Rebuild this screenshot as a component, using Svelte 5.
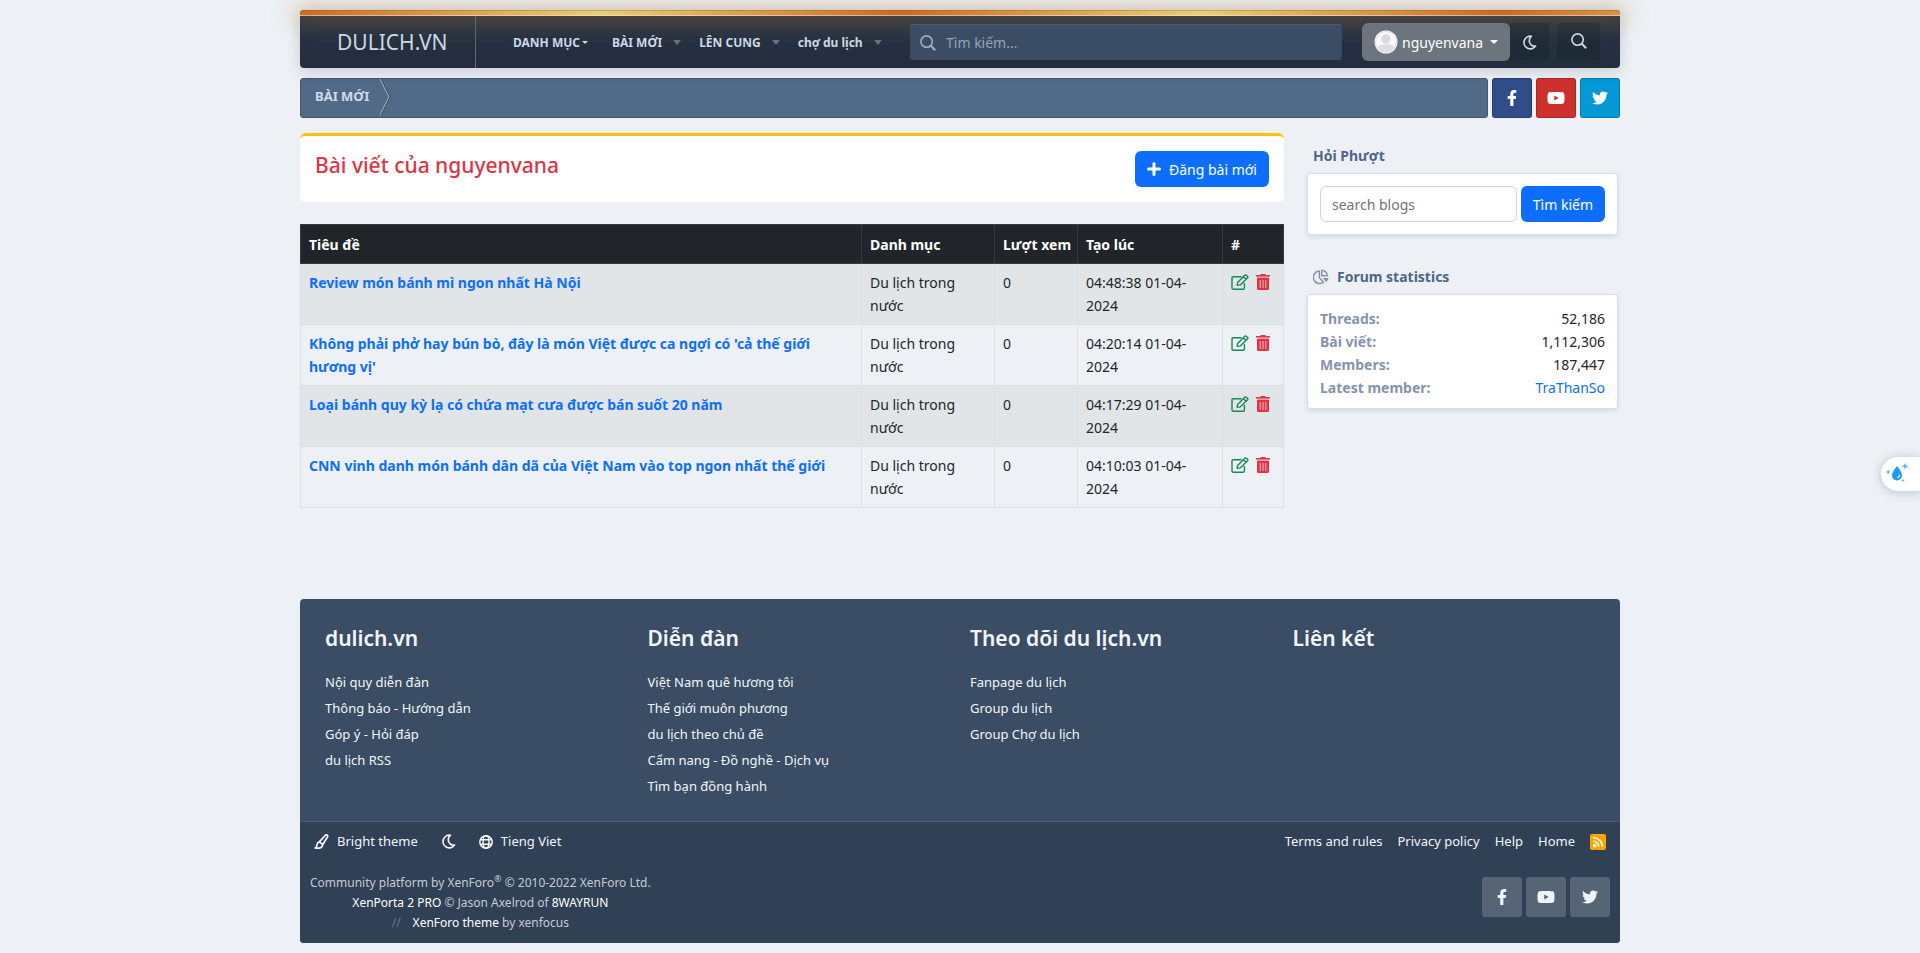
<script>
  const nav = ['BÀI MỚI', 'LÊN CUNG', 'chợ du lịch'];

  const posts = [
    { title: 'Review món bánh mì ngon nhất Hà Nội', views: 0, time: '04:48:38 01-04-2024' },
    { title: "Không phải phở hay bún bò, đây là món Việt được ca ngợi có 'cả thế giới hương vị'", views: 0, time: '04:20:14 01-04-2024' },
    { title: 'Loại bánh quy kỳ lạ có chứa mạt cưa được bán suốt 20 năm', views: 0, time: '04:17:29 01-04-2024' },
    { title: 'CNN vinh danh món bánh dân dã của Việt Nam vào top ngon nhất thế giới', views: 0, time: '04:10:03 01-04-2024' }
  ];

  const stats = [
    ['Threads:', '52,186'],
    ['Bài viết:', '1,112,306'],
    ['Members:', '187,447']
  ];

  const columns = [
    { title: 'dulich.vn', links: ['Nội quy diễn đàn', 'Thông báo - Hướng dẫn', 'Góp ý - Hỏi đáp', 'du lịch RSS'] },
    { title: 'Diễn đàn', links: ['Việt Nam quê hương tôi', 'Thế giới muôn phương', 'du lịch theo chủ đề', 'Cẩm nang - Đồ nghề - Dịch vụ', 'Tìm bạn đồng hành'] },
    { title: 'Theo dõi du lịch.vn', links: ['Fanpage du lịch', 'Group du lịch', 'Group Chợ du lịch'] },
    { title: 'Liên kết', links: [] }
  ];

  const legal = ['Terms and rules', 'Privacy policy', 'Help', 'Home'];
</script>

{#snippet facebook()}
  <svg width="10" height="16" viewBox="0 0 320 512" fill="currentColor" aria-hidden="true"><path d="M279.14 288l14.22-92.66h-88.91v-60.13c0-25.35 12.42-50.06 52.24-50.06h40.42V6.26S260.43 0 225.36 0c-73.22 0-121.08 44.38-121.08 124.72v70.62H22.89V288h81.39v224h100.17V288z" /></svg>
{/snippet}
{#snippet youtube()}
  <svg width="18" height="16" viewBox="0 0 576 512" fill="currentColor" aria-hidden="true"><path d="M549.655 124.083c-6.281-23.65-24.787-42.276-48.284-48.597C458.781 64 288 64 288 64S117.22 64 74.629 75.486c-23.497 6.322-42.003 24.947-48.284 48.597-11.412 42.867-11.412 132.305-11.412 132.305s0 89.438 11.412 132.305c6.281 23.65 24.787 41.5 48.284 47.821C117.22 448 288 448 288 448s170.78 0 213.371-11.486c23.497-6.321 42.003-24.171 48.284-47.821 11.412-42.867 11.412-132.305 11.412-132.305s0-89.438-11.412-132.305zm-317.51 213.508V175.185l142.739 81.205-142.739 81.201z" /></svg>
{/snippet}
{#snippet twitter()}
  <svg width="16" height="16" viewBox="0 0 512 512" fill="currentColor" aria-hidden="true"><path d="M459.37 151.716c.325 4.548.325 9.097.325 13.645 0 138.72-105.583 298.558-298.558 298.558-59.452 0-114.68-17.219-161.137-47.106 8.447.974 16.568 1.299 25.34 1.299 49.055 0 94.213-16.568 130.274-44.832-46.132-.975-84.792-31.188-98.112-72.772 6.498.974 12.995 1.624 19.818 1.624 9.421 0 18.843-1.3 27.614-3.573-48.081-9.747-84.143-51.98-84.143-102.985v-1.299c13.969 7.797 30.214 12.67 47.431 13.319-28.264-18.843-46.781-51.005-46.781-87.391 0-19.492 5.197-37.36 14.294-52.954 51.655 63.675 129.3 105.258 216.365 109.807-1.624-7.797-2.599-15.918-2.599-24.04 0-57.828 46.782-104.934 104.934-104.934 30.213 0 57.502 12.67 76.67 33.137 23.715-4.548 46.456-13.32 66.599-25.34-7.798 24.366-24.366 44.833-46.132 57.827 21.117-2.273 41.584-8.122 60.426-16.243-14.292 20.791-32.161 39.308-52.628 54.253z" /></svg>
{/snippet}
{#snippet moon()}
  <svg width="15" height="15" viewBox="0 0 16 16" fill="none" stroke="currentColor" stroke-width="1.8" stroke-linejoin="round" aria-hidden="true"><path d="M10 1.4A6.7 6.7 0 1 0 14.4 11.8A5.6 5.6 0 0 1 7.8 6A5.6 5.6 0 0 1 10 1.4Z" /></svg>
{/snippet}
{#snippet magnifier()}
  <svg width="16" height="16" viewBox="0 0 16 16" fill="none" stroke="currentColor" stroke-width="1.6" aria-hidden="true"><circle cx="6.6" cy="6.6" r="5.7" /><path d="M10.8 10.8L15.2 15.2" stroke-width="2" /></svg>
{/snippet}

<div class="page">
  <header>
    <div class="gold"></div>
    <a class="logo" href="#home">DULICH.VN</a>
    <nav>
      <a class="menu" href="#menu">DANH MỤC<span class="caret"></span></a>
      {#each nav as item}
        <a href="#nav">{item}<span class="arrow"></span></a>
      {/each}
    </nav>
    <label class="search">
      {@render magnifier()}
      <input type="search" placeholder="Tìm kiếm..." aria-label="Tìm kiếm" />
    </label>
    <button class="user">
      <svg width="24" height="24" viewBox="0 0 24 24" aria-hidden="true"><circle cx="12" cy="12" r="11.5" fill="#fff" /><circle cx="12" cy="12" r="10.5" fill="#fcfcfd" stroke="#dcdfe2" /><circle cx="12" cy="9" r="4.8" fill="#d9dbdf" /><path d="M3.6 17.8C5.2 14 8 13.6 12 14.6C16 13.6 18.8 14 20.4 17.8A10.3 10.3 0 0 1 3.6 17.8Z" fill="#dcdee2" /></svg>
      nguyenvana<span class="caret"></span>
    </button>
    <button class="tool moon" aria-label="Dark mode">{@render moon()}</button>
    <button class="tool find" aria-label="Search">{@render magnifier()}</button>
  </header>

  <div class="crumbs">
    <div class="trail">
      <a href="#new">BÀI MỚI</a>
      <svg width="12" height="36" viewBox="0 0 12 36" fill="none" aria-hidden="true"><path d="M2 0L11 18L2 36" stroke="#33475f" /><path d="M1 0L10 18L1 36" stroke="#a9b7c7" /></svg>
    </div>
    <a class="social fb" href="#facebook" aria-label="Facebook">{@render facebook()}</a>
    <a class="social yt" href="#youtube" aria-label="YouTube">{@render youtube()}</a>
    <a class="social tw" href="#twitter" aria-label="Twitter">{@render twitter()}</a>
  </div>

  <div class="layout">
    <main>
      <section class="heading">
        <h1>Bài viết của nguyenvana</h1>
        <button class="primary">
          <svg width="14" height="14" viewBox="0 0 14 14" stroke="currentColor" stroke-width="3" stroke-linecap="round" aria-hidden="true"><path d="M7 1.5V12.5M1.5 7H12.5" /></svg>
          Đăng bài mới
        </button>
      </section>
      <table>
        <colgroup><col /><col class="c2" /><col class="c3" /><col class="c4" /><col class="c5" /></colgroup>
        <thead>
          <tr><th>Tiêu đề</th><th>Danh mục</th><th>Lượt xem</th><th>Tạo lúc</th><th>#</th></tr>
        </thead>
        <tbody>
          {#each posts as post}
            <tr>
              <td><a class="title" href="#post">{post.title}</a></td>
              <td>Du lịch trong nước</td>
              <td>{post.views}</td>
              <td>{post.time}</td>
              <td>
                <div class="actions">
                  <a class="edit" href="#edit" aria-label="Edit">
                    <svg width="18" height="16" viewBox="0 0 18 16" fill="none" stroke="currentColor" stroke-width="1.4" stroke-linejoin="round" aria-hidden="true"><path d="M10 2.7H2.2Q1 2.7 1 3.9V14Q1 15.2 2.2 15.2H12.2Q13.4 15.2 13.4 14V9.5" stroke-linecap="round" /><path d="M6.2 11.2L6.6 8.4L14 1.1Q14.6 .6 15.3 1.2L16.6 2.5Q17.2 3.1 16.6 3.8L9.2 10.9ZM12.4 2.7L15 5.3" /></svg>
                  </a>
                  <a class="delete" href="#delete" aria-label="Delete">
                    <svg width="14" height="16" viewBox="0 0 14 16" aria-hidden="true"><path d="M0 1H4L5 0H9L10 1H14V2.4H0Z" fill="currentColor" /><path d="M1 2.4H13V4H1Z" fill="currentColor" opacity=".4" /><path d="M1 4H13V14.5Q13 16 11.5 16H2.5Q1 16 1 14.5Z" fill="currentColor" /><path d="M4.2 6V14M7 6V14M9.8 6V14" stroke="#f2bcc2" stroke-width="1" /></svg>
                  </a>
                </div>
              </td>
            </tr>
          {/each}
        </tbody>
      </table>
    </main>

    <aside>
      <h2>Hỏi Phượt</h2>
      <form class="box ask">
        <input type="text" placeholder="search blogs" aria-label="search blogs" />
        <button type="button" class="primary">Tìm kiếm</button>
      </form>
      <h2 class="second">
        <svg width="16" height="16" viewBox="0 0 17 16" fill="none" stroke="#8595ab" stroke-width="1.6" stroke-linejoin="round" aria-hidden="true"><path d="M6.8 1.6A6.7 6.7 0 1 0 11.2 13.6L6.8 8.8Z" /><path d="M9.3 .8V6.6H15.2A6 6 0 0 0 9.3 .8Z" /><path d="M10 9H16.6Q16.2 11.6 14 13.4Z" fill="#8595ab" stroke="none" /></svg>
        Forum statistics
      </h2>
      <dl class="box stats">
        {#each stats as [label, value]}
          <div><dt>{label}</dt><dd>{value}</dd></div>
        {/each}
        <div><dt>Latest member:</dt><dd><a href="#member">TraThanSo</a></dd></div>
      </dl>
    </aside>
  </div>

  <footer>
    <div class="columns">
      {#each columns as col}
        <section>
          <h3>{col.title}</h3>
          <ul>
            {#each col.links as link}<li><a href="#link">{link}</a></li>{/each}
          </ul>
        </section>
      {/each}
    </div>
    <div class="bottom">
      <div class="options">
        <a class="theme" href="#theme">
          <svg width="15" height="15" viewBox="0 0 15 16" fill="none" stroke="currentColor" stroke-width="1.8" stroke-linejoin="round" aria-hidden="true"><path d="M5.2 8.4L11.6 1.3Q12.6 .5 13.6 1.2Q14.5 2 13.9 3.2L8.8 11.2" /><path d="M5.2 8.4L8.8 11.2Q8.6 14.6 5 15H.8Q2.6 13.8 2.6 11.6Q3 8.9 5.2 8.4Z" /></svg>
          Bright theme
        </a>
        <a class="night" href="#dark" aria-label="Dark mode">{@render moon()}</a>
        <a class="theme" href="#language">
          <svg width="14" height="14" viewBox="0 0 14 14" fill="none" stroke="currentColor" stroke-width="1.5" aria-hidden="true"><circle cx="7" cy="7" r="6.2" /><ellipse cx="7" cy="7" rx="3" ry="6.2" /><path d="M1 4.8H13M1 9.2H13" /></svg>
          Tieng Viet
        </a>
        <div class="legal">
          {#each legal as item}<a href="#legal">{item}</a>{/each}
          <a class="rss" href="#rss" aria-label="RSS">
            <svg width="16" height="16" viewBox="0 0 16 16" fill="none" stroke="#fff" stroke-width="1.5" aria-hidden="true"><circle cx="4.6" cy="11.6" r="1.1" fill="#fff" /><path d="M3.2 7.3A5.5 5.5 0 0 1 8.8 12.8M3.2 3.8A9 9 0 0 1 12.4 12.8" /></svg>
          </a>
        </div>
      </div>
      <div class="credits">
        <p>
          Community platform by XenForo<sup>®</sup> © 2010-2022 XenForo Ltd.<br />
          <a href="#porta">XenPorta 2 PRO</a> © Jason Axelrod of <a href="#run">8WAYRUN</a><br />
          <span class="slashes">//</span><a href="#xf">XenForo theme</a> by xenfocus
        </p>
        <div class="share">
          <a class="social dim" href="#facebook" aria-label="Facebook">{@render facebook()}</a>
          <a class="social dim" href="#youtube" aria-label="YouTube">{@render youtube()}</a>
          <a class="social dim" href="#twitter" aria-label="Twitter">{@render twitter()}</a>
        </div>
      </div>
    </div>
  </footer>
</div>

<button class="floating" aria-label="Assistant">
  <svg width="24" height="22" viewBox="0 0 24 22" aria-hidden="true"><path d="M12 3C14.8 6.4 17 9.6 17 12.4A5 5 0 0 1 7 12.4C7 9.6 9.2 6.4 12 3Z" fill="#1c9cf0" /><path d="M14.6 12.2Q14.4 14 12.8 14.6" stroke="#fff" stroke-width="1.3" fill="none" stroke-linecap="round" /><path d="M20 0L21 2.3L23.4 3.2L21 4.2L20 6.5L19 4.2L16.8 3.2L19 2.3ZM3.2 6.6L4 8.3L5.7 9L4 9.8L3.2 11.4L2.4 9.8L.8 9L2.4 8.3ZM18 15.6L18.6 16.9L19.8 17.4L18.6 18L18 19.2L17.4 18L16.2 17.4L17.4 16.9Z" fill="#52b9f5" /></svg>
</button>

<style>
  :global(body) {
    background: #edf1f6;
    color: #212529;
    font: 14px/23px "Noto Sans", "Open Sans", sans-serif;
  }
  * { box-sizing: border-box; }
  a { text-decoration: none; color: inherit; }
  svg { flex: none; display: block; }
  button, input { font: inherit; border: 0; margin: 0; }
  button { cursor: pointer; }
  h1, h2, h3, p, ul, dl, dd { margin: 0; padding: 0; }
  ul { list-style: none; }

  .page { max-width: 1320px; margin: 0 auto; padding: 10px 0; }

  header {
    position: relative;
    isolation: isolate;
    display: flex;
    align-items: center;
    height: 58px;
    padding: 6px 20px 0 0;
    border-radius: 4px;
    background: linear-gradient(#263344, #242d3d);
    box-shadow: 0 3px 14px rgba(40, 50, 50, .2);
    color: #cbd8e6;
  }
  .gold {
    position: absolute;
    z-index: -1;
    inset: 0 0 auto;
    height: 6px;
    border-radius: 4px 4px 0 0;
    background: repeating-linear-gradient(90deg, #c86d2c 0, #e9cd7e 300px, #c86d2c 600px);
    box-shadow: inset 0 1px rgba(120, 60, 0, .25), inset 0 -1px rgba(255, 240, 200, .5), 0 0 22px 8px rgba(196, 135, 58, .3);
  }
  .logo {
    align-self: stretch;
    display: flex;
    align-items: center;
    width: 176px;
    padding-left: 37px;
    border-right: 1px solid #5f6870;
    font-size: 21px;
  }
  nav {
    display: flex;
    gap: 18px;
    width: 434px;
    padding-left: 37px;
    font-size: 12px;
    font-weight: 700;
    white-space: nowrap;
  }
  nav a { display: flex; align-items: center; }
  .menu { margin-right: 6px; }
  .caret { border: 4px solid transparent; border-top-color: currentColor; border-bottom: 0; }
  nav .caret { border-width: 3px; border-bottom: 0; margin-left: 2px; }
  .arrow { margin-left: 11px; border: 4px solid transparent; border-top: 5px solid #66727f; border-bottom: 0; }

  .search {
    display: flex;
    flex: 1;
    align-items: center;
    gap: 10px;
    height: 36px;
    padding: 0 10px;
    border-radius: 3px;
    background: #3a4d64;
    border-top: 1px solid #4b5d73;
    color: #a3b1c2;
  }
  .search input { flex: 1; min-width: 0; padding: 0; background: none; color: #fff; outline: 0; }
  .search input::placeholder { color: #93a4b8; opacity: 1; }
  .user {
    display: flex;
    align-items: center;
    gap: 4px;
    width: 148px;
    height: 38px;
    margin-left: 20px;
    padding: 0 12px;
    border-radius: 6px;
    background: #6c757d;
    color: #fff;
  }
  .user .caret { margin-left: auto; }
  .tool {
    display: grid;
    place-items: center;
    width: 39px;
    height: 38px;
    padding: 0;
    border-radius: 3px;
    background: rgba(20, 32, 40, .3);
    color: #cbd8e6;
  }
  .find { width: 43px; margin-left: 8px; padding-bottom: 3px; }

  .crumbs { display: flex; gap: 4px; margin-top: 10px; }
  .trail {
    display: flex;
    flex: 1;
    height: 40px;
    padding-left: 14px;
    border: 1px solid #42566e;
    border-radius: 3px;
    background: #506a87;
    color: #d0dbe7;
    font-size: 13px;
    font-weight: 700;
    line-height: 34px;
  }
  .trail svg { margin-left: 10px; }
  .social {
    display: grid;
    place-items: center;
    width: 40px;
    height: 40px;
    border: 1px solid rgba(0, 0, 0, .2);
    border-radius: 3px;
    color: #fff;
  }
  .fb { background: #304d8a; }
  .yt { background: #cd312d; }
  .tw { background: #0598d6; }
  .dim { background: #566575; border: 0; color: #f0f4f8; }

  .layout { display: flex; gap: 23px; margin-top: 15px; padding-right: 2px; }
  main { flex: 1; min-width: 0; }
  .heading {
    display: flex;
    justify-content: space-between;
    align-items: flex-start;
    height: 69px;
    padding: 15px;
    border-top: 3px solid #ffc107;
    border-radius: 6px;
    background: #fff;
  }
  h1 { color: #dc3545; font-size: 21px; font-weight: 500; line-height: 28px; }
  .primary {
    display: flex;
    align-items: center;
    justify-content: center;
    gap: 8px;
    height: 36px;
    padding: 0 12px;
    border-radius: 6px;
    background: #0d6efd;
    color: #fff;
    white-space: nowrap;
  }

  table { width: 100%; margin-top: 22px; border-collapse: collapse; table-layout: fixed; }
  .c2 { width: 133px; }
  .c3 { width: 83px; }
  .c4 { width: 145px; }
  .c5 { width: 61px; }
  th, td { padding: 7px 8px; border: 1px solid #dcdfe3; text-align: left; vertical-align: top; }
  th { padding: 8px 7px 7px 8px; background: #212529; border-color: #373b3e; color: #fff; white-space: nowrap; }
  tbody tr:nth-child(odd) { background: #e1e5e8; }
  .title { color: #0d6efd; font-weight: 700; }
  .actions { display: flex; gap: 7px; padding-top: 3px; }
  .edit { color: #198754; }
  .delete { color: #dc3545; }

  aside { width: 311px; padding-top: 11px; }
  h2 {
    display: flex;
    align-items: center;
    gap: 8px;
    padding-left: 6px;
    color: #4d6785;
    font-size: 14px;
    line-height: 23px;
  }
  .second { margin-top: 30px; }
  .box {
    margin-top: 6px;
    padding: 12px;
    border: 1px solid #d5e0ec;
    border-radius: 3px;
    background: #fff;
    box-shadow: 0 2px 4px rgba(90, 130, 180, .2);
  }
  .ask { display: flex; gap: 4px; }
  .ask input {
    flex: 1;
    min-width: 0;
    height: 36px;
    padding: 0 11px;
    border: 1px solid #ced4da;
    border-radius: 6px;
  }
  .ask input::placeholder { color: #6c757d; opacity: 1; }
  .stats { padding: 12px 12px 9px; }
  .stats div { display: flex; justify-content: space-between; }
  dt { color: #8593ac; font-weight: 700; }
  dd a { color: #0d6efd; }

  footer {
    margin-top: 91px;
    border-radius: 4px;
    overflow: hidden;
    background: #3a4d64;
    color: #f2f6fa;
    font-size: 13px;
  }
  .columns { display: grid; grid-template-columns: repeat(4, 1fr); padding: 23px 5px 22px 25px; }
  h3 { margin-bottom: 15px; font-size: 21px; font-weight: 600; line-height: 32px; }
  li { line-height: 26px; }
  .bottom { padding: 8px 10px 10px; border-top: 1px solid #4e5d78; background: #304055; }
  .options { display: flex; align-items: center; padding: 0 4px; }
  .theme { display: flex; align-items: center; gap: 8px; }
  .night { margin: 0 23px; }
  .legal { display: flex; align-items: center; gap: 15px; margin-left: auto; }
  .rss { border-radius: 2px; background: #ffa500; }
  .credits { display: flex; align-items: flex-start; justify-content: space-between; margin-top: 20px; }
  .credits p { color: #c4ccd4; font-size: 12px; line-height: 20px; text-align: center; }
  .credits p a { color: #fff; }
  .share { display: flex; gap: 4px; padding-top: 4px; }
  sup { font-size: 9px; line-height: 0; }
  .slashes { margin-right: 12px; color: #6a7887; }

  .floating {
    position: fixed;
    top: 457px;
    right: 0;
    width: 39px;
    height: 34px;
    padding: 0 0 0 4px;
    border-radius: 17px 0 0 17px;
    background: #fff;
    box-shadow: 0 1px 10px rgba(40, 60, 90, .28);
  }
</style>
